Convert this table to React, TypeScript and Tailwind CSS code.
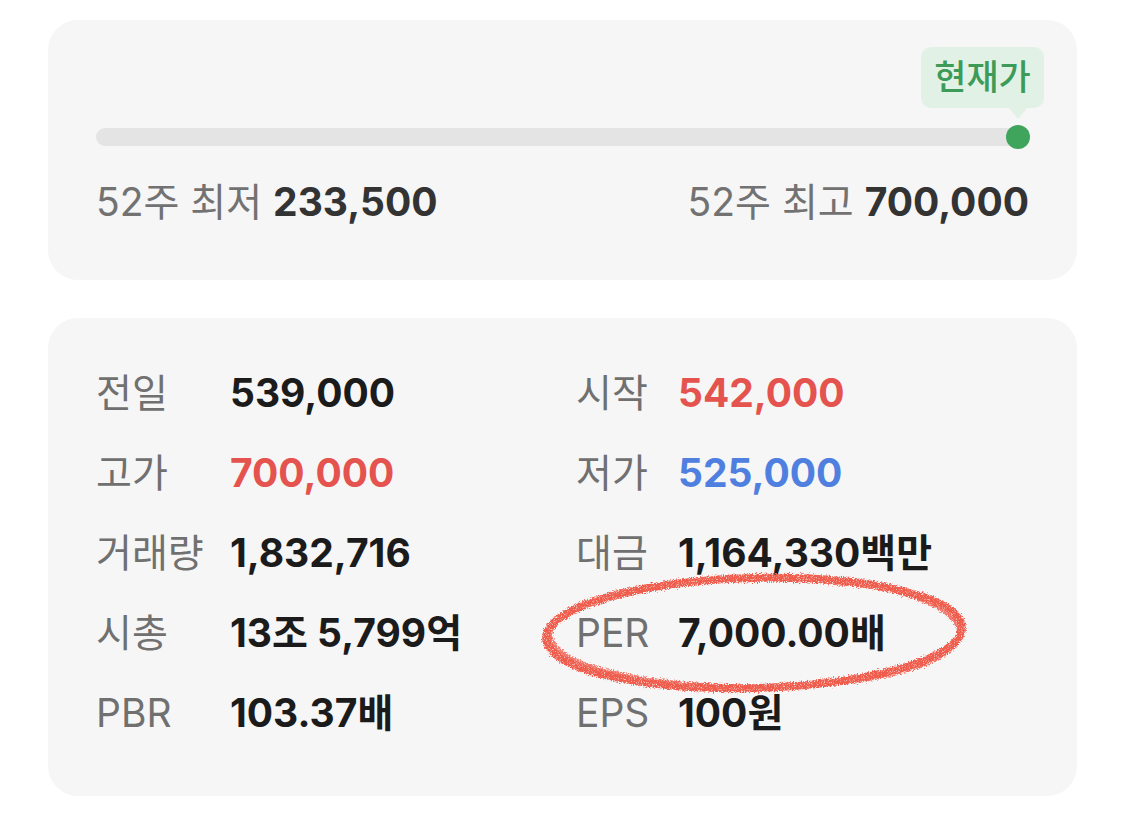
const font = { fontFamily: '"Inter", "Noto Sans CJK KR", sans-serif' };

type Cell = { label: string; value: string; color?: string };

const rows: [Cell, Cell][] = [
  [
    { label: "전일", value: "539,000" },
    { label: "시작", value: "542,000", color: "text-[#e5534e]" },
  ],
  [
    { label: "고가", value: "700,000", color: "text-[#e5534e]" },
    { label: "저가", value: "525,000", color: "text-[#4f80e0]" },
  ],
  [
    { label: "거래량", value: "1,832,716" },
    { label: "대금", value: "1,164,330백만" },
  ],
  [
    { label: "시총", value: "13조 5,799억" },
    { label: "PER", value: "7,000.00배" },
  ],
  [
    { label: "PBR", value: "103.37배" },
    { label: "EPS", value: "100원" },
  ],
];

// hand drawn red loop around PER
function Circle() {
  return (
    <svg
      className="absolute left-[488px] top-[248px] pointer-events-none"
      width="436"
      height="136"
      viewBox="0 0 436 136"
    >
      <defs>
        <filter id="crayon" x="-10%" y="-30%" width="120%" height="160%">
          <feTurbulence type="fractalNoise" baseFrequency="0.8" numOctaves="3" result="n" />
          <feDisplacementMap in="SourceGraphic" in2="n" scale="6" xChannelSelector="R" yChannelSelector="G" result="d" />
          <feTurbulence type="fractalNoise" baseFrequency="1.4" numOctaves="1" seed="3" result="n2" />
          <feColorMatrix
            in="n2"
            type="matrix"
            values="0 0 0 0 0  0 0 0 0 0  0 0 0 0 0  0 0 0 -3 2.6"
            result="mask"
          />
          <feComposite in="d" in2="mask" operator="in" />
        </filter>
      </defs>
      <g filter="url(#crayon)" fill="none" stroke="#f05c4c" strokeLinecap="round">
        <ellipse cx="218" cy="67" rx="208" ry="55" transform="rotate(-1.5 218 67)" strokeWidth="8" />
        <path
          d="M300 16 C 390 24, 428 50, 423 70 C 416 100, 330 121, 220 121 C 100 121, 16 98, 14 70 C 12 40, 90 15, 210 12 C 250 11, 280 13, 310 18"
          strokeWidth="5"
          opacity="0.8"
        />
      </g>
    </svg>
  );
}

export default function App() {
  return (
    <div className="min-h-[826px] bg-white px-12 pt-5" style={font}>
      <div className="rounded-[30px] bg-[#f6f6f6] px-12 pt-[27px] pb-[50px]">
        <div className="flex justify-end">
          <div className="relative -mr-[15px] flex h-[61px] w-[123px] items-center justify-center rounded-[10px] bg-[#e2f1e6] text-[35px] font-medium text-[#3d9b58]">
            현재가
            <div className="absolute left-[87px] top-[60px] h-0 w-0 border-x-[10px] border-t-[12px] border-x-transparent border-t-[#e2f1e6]" />
          </div>
        </div>
        <div className="mt-[17px] flex h-6 items-center">
          <div className="relative h-[18px] flex-1 rounded-full bg-[#e4e4e4]">
            <div className="absolute -right-px top-[-3px] h-6 w-6 rounded-full bg-[#3fa45c]" />
          </div>
        </div>
        <div className="mt-[25px] flex justify-between text-[39px] leading-[56px]">
          <div>
            <span className="text-[#727272]">52주 최저 </span>
            <span className="font-bold text-[#333333]">233,500</span>
          </div>
          <div>
            <span className="text-[#727272]">52주 최고 </span>
            <span className="font-bold text-[#333333]">700,000</span>
          </div>
        </div>
      </div>

      <div className="relative mt-[38px] rounded-[30px] bg-[#f6f6f6] px-12 pt-[35px] pb-[43px]">
        {rows.map(([l, r]) => (
          <div key={l.label} className="flex text-[39px] leading-[80px]">
            <div className="flex w-[480px]">
              <span className="w-[134px] text-[#707070]">{l.label}</span>
              <span className={`font-bold ${l.color ?? "text-[#1b1b1b]"}`}>{l.value}</span>
            </div>
            <div className="flex">
              <span className="w-[102px] text-[#707070]">{r.label}</span>
              <span className={`font-bold ${r.color ?? "text-[#1b1b1b]"}`}>{r.value}</span>
            </div>
          </div>
        ))}
        <Circle />
      </div>
    </div>
  );
}
